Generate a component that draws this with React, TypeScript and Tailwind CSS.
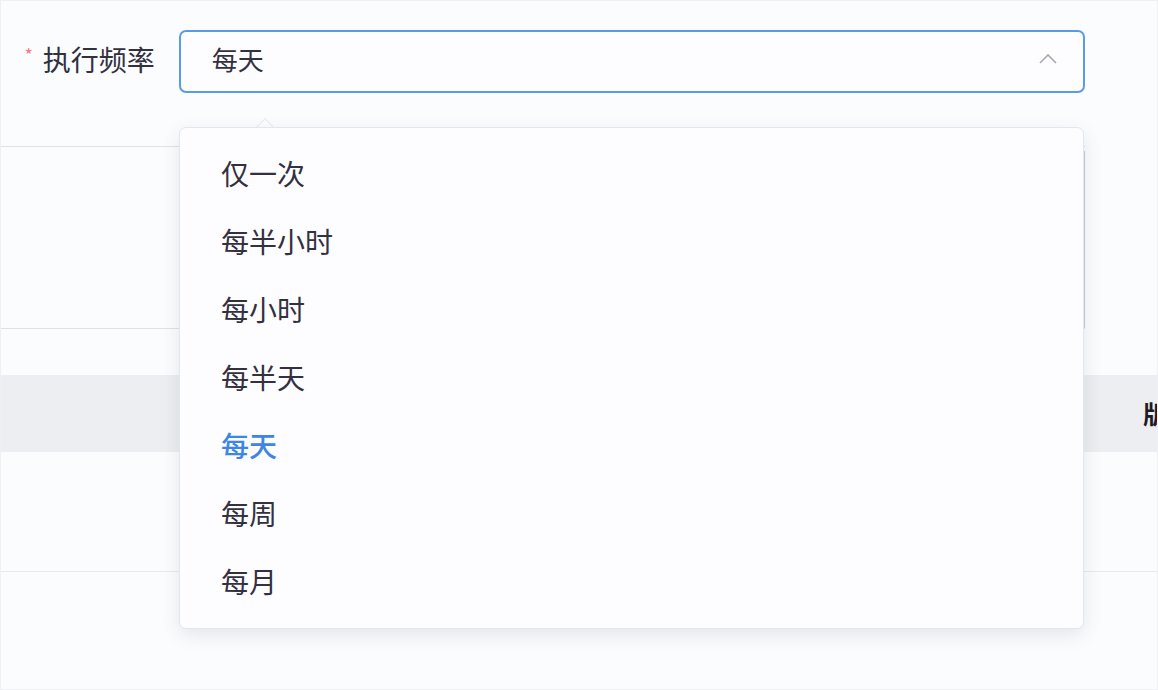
import React from "react";

const items = ["仅一次", "每半小时", "每小时", "每半天", "每天", "每周", "每月"];

export default function App() {
  return (
    <div
      className="relative w-[1158px] h-[690px] overflow-hidden bg-[#fbfcfe] border border-[#eef0f4]"
      style={{ fontFamily: '"Noto Sans CJK SC", "Noto Sans", sans-serif' }}
    >
      {/* form row */}
      <div className="h-[146px] w-[1084px] border-b border-[#dde2e8]">
        <div className="flex items-center pt-[29px]">
          <div className="w-[178px] h-[63px] flex items-center justify-end pr-[24px] pb-[6px] text-[28px] text-[#33303f]">
            <span className="text-[18px] text-[#f07a7a] mr-[10px] -mt-[8px]">*</span>
            <span>执行频率</span>
          </div>
          <div className="w-[907px] h-[63px] rounded-[7px] border-[2px] border-[#5b9be6] bg-[#fdfdff] flex items-center justify-between pl-[31px] pr-[25px] pb-[6px]">
            <span className="text-[26px] text-[#33303f]">每天</span>
            <svg width="20" height="12" viewBox="0 0 20 12" fill="none">
              <path d="M2 10 L10 2 L18 10" stroke="#a8abb2" strokeWidth="1.6" />
            </svg>
          </div>
        </div>
      </div>

      {/* second section */}
      <div className="h-[182px] w-[1084px] border-b border-[#dde2e8] flex">
        <div className="flex-1" />
        <div className="w-[1px] bg-[#c9ced8] mt-[4px]" />
      </div>

      <div className="h-[46px]" />

      {/* gray header band */}
      <div className="h-[77px] bg-[#eceef1] flex items-center">
        <span className="ml-[1142px] text-[25px] font-bold text-[#1d1a26] whitespace-nowrap">版</span>
      </div>

      <div className="h-[120px] border-b border-[#e6e9ee]" />

      {/* dropdown arrow */}
      <div className="absolute left-[257px] top-[120px] w-[14px] h-[14px] rotate-45 bg-[#fdfdff] border-l border-t border-[#e8ebf0]" />

      {/* dropdown panel */}
      <div className="absolute left-[178px] top-[126px] w-[905px] h-[502px] rounded-[7px] border border-[#e3e6ec] bg-[#fdfdff] shadow-[0_6px_18px_rgba(60,70,90,0.12)] pt-[11px]">
        {items.map((it) => (
          <div
            key={it}
            className={
              "h-[68px] flex items-center pl-[41px] text-[28px] " +
              (it === "每天" ? "text-[#3b86e6] font-medium" : "text-[#33303f]")
            }
          >
            {it}
          </div>
        ))}
      </div>
    </div>
  );
}
